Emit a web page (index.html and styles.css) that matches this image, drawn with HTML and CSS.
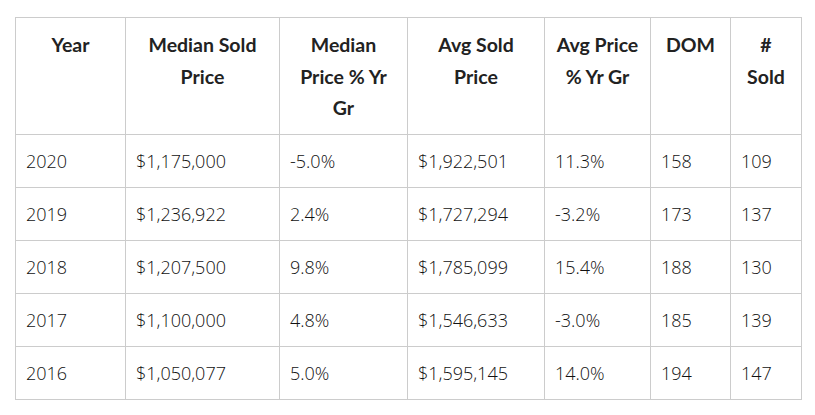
FILE: index.html
```html
<!DOCTYPE html>
<html lang="en">
<head>
<meta charset="utf-8">
<title>Sales by Year</title>
<link rel="stylesheet" href="styles.css">
</head>
<body>
<div class="wrap">
<table class="stats">
<colgroup>
<col class="c1"><col class="c2"><col class="c3"><col class="c4"><col class="c5"><col class="c6"><col class="c7">
</colgroup>
<thead>
<tr>
<th>Year</th>
<th>Median Sold Price</th>
<th>Median Price % Yr Gr</th>
<th>Avg Sold Price</th>
<th>Avg Price % Yr Gr</th>
<th>DOM</th>
<th># Sold</th>
</tr>
</thead>
<tbody>
<tr><td>2020</td><td>$1,175,000</td><td>-5.0%</td><td>$1,922,501</td><td>11.3%</td><td>158</td><td>109</td></tr>
<tr><td>2019</td><td>$1,236,922</td><td>2.4%</td><td>$1,727,294</td><td>-3.2%</td><td>173</td><td>137</td></tr>
<tr><td>2018</td><td>$1,207,500</td><td>9.8%</td><td>$1,785,099</td><td>15.4%</td><td>188</td><td>130</td></tr>
<tr><td>2017</td><td>$1,100,000</td><td>4.8%</td><td>$1,546,633</td><td>-3.0%</td><td>185</td><td>139</td></tr>
<tr><td>2016</td><td>$1,050,077</td><td>5.0%</td><td>$1,595,145</td><td>14.0%</td><td>194</td><td>147</td></tr>
</tbody>
</table>
</div>
</body>
</html>
```
FILE: styles.css
```css
html, body {
  margin: 0;
  padding: 0;
  background: #fff;
}
.wrap {
  padding: 17px 15px;
}
.stats {
  border-collapse: collapse;
  table-layout: fixed;
  width: 786px;
}
.c1 { width: 110px; }
.c2 { width: 154px; }
.c3 { width: 128px; }
.c4 { width: 137px; }
.c5 { width: 106px; }
.c6 { width: 80px; }
.c7 { width: 71px; }
.stats th,
.stats td {
  border: 1px solid #ccc;
  padding: 11px 10px;
  vertical-align: top;
}
.stats th {
  font-family: Lato, "Liberation Sans", sans-serif;
  font-weight: 700;
  font-size: 19.5px;
  line-height: 31.5px;
  color: #222;
  text-align: center;
  padding-bottom: 10px;
}
.stats td {
  font-family: "Open Sans", "Liberation Sans", sans-serif;
  font-weight: 300;
  font-size: 18px;
  line-height: 30px;
  color: #111;
  text-align: left;
}
```
